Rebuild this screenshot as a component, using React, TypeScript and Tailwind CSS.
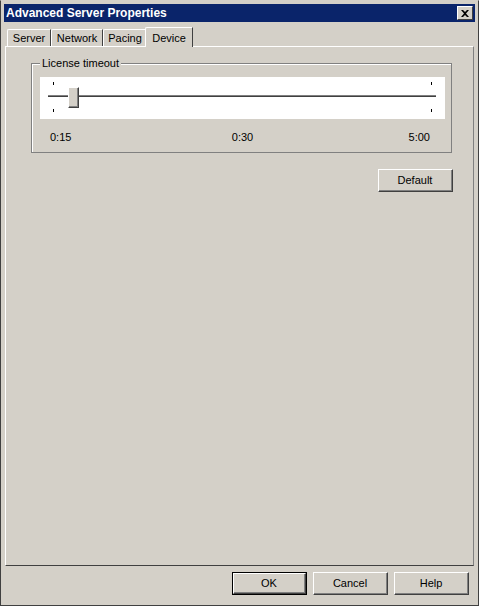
import React from "react";

const font = { fontFamily: '"Liberation Sans", Arial, sans-serif' };

function Btn({ label, isDefault = false }: { label: string; isDefault?: boolean }) {
  return (
    <div className={`w-[75px] h-[23px] ${isDefault ? "border border-black" : ""}`}>
      <div className="w-full h-full border-t border-l border-white border-r border-b border-r-[#404040] border-b-[#404040]">
        <div className="w-full h-full border-r border-b border-[#808080] flex items-center justify-center text-[11px] text-black bg-[#d4d0c8]">
          {label}
        </div>
      </div>
    </div>
  );
}

function Tab({ label, width, active = false }: { label: string; width: number; active?: boolean }) {
  if (active) {
    return (
      <div
        className="h-[20px] -mb-[1px] -ml-[2px] z-10 bg-[#d4d0c8] border-t border-l border-white border-r border-r-[#404040] rounded-tl-[2px] flex items-start justify-center pt-[2px] text-[11px] text-black"
        style={{ width }}
      >
        {label}
      </div>
    );
  }
  return (
    <div
      className="h-[17px] bg-[#d4d0c8] border-t border-l border-white border-r border-r-[#404040] rounded-tl-[2px] flex items-center justify-center text-[11px] text-black"
      style={{ width }}
    >
      {label}
    </div>
  );
}

export default function App() {
  return (
    <div style={font} className="w-[479px] h-[606px] bg-[#d4d0c8] border border-[#404040] border-t-[#d4d0c8] border-l-[#404040] p-[3px] flex flex-col select-none">
      {/* title bar */}
      <div className="h-[18px] bg-[#0a246a] flex items-center justify-between pl-[2px] pr-[2px]">
        <span className="text-white font-bold text-[12px] leading-none">Advanced Server Properties</span>
        <div className="w-[16px] h-[14px] bg-[#d4d0c8] border-t border-l border-white border-r border-b border-r-[#404040] border-b-[#404040] flex items-center justify-center">
          <svg width="8" height="7" viewBox="0 0 8 7">
            <path d="M0 0 L2 0 L4 2 L6 0 L8 0 L5 3.5 L8 7 L6 7 L4 5 L2 7 L0 7 L3 3.5 Z" fill="black" />
          </svg>
        </div>
      </div>

      {/* tabs */}
      <div className="flex items-end mt-[5px] pl-[3px] h-[19px]">
        <Tab label="Server" width={44} />
        <Tab label="Network" width={52} />
        <Tab label="Pacing" width={44} />
        <Tab label="Device" width={48} active />
      </div>

      {/* tab page */}
      <div className="mx-[1px] h-[520px] border-t border-l border-white border-r border-b border-r-[#808080] border-b-[#404040] pt-[16px] pl-[25px] pr-[21px]">
        <div className="relative border border-[#808080] h-[90px]">
          <div className="absolute inset-0 border-t border-l border-white pointer-events-none" />
          <span className="absolute -top-[8px] left-[8px] px-[2px] bg-[#d4d0c8] text-[11px] text-black leading-[14px]">
            License timeout
          </span>
          <div className="mt-[13px] ml-[8px] mr-[6px] h-[42px] bg-white relative">
            {/* ticks */}
            <div className="absolute left-[13px] top-[5px] w-[1px] h-[3px] bg-black" />
            <div className="absolute left-[13px] top-[32px] w-[1px] h-[3px] bg-black" />
            <div className="absolute left-[391px] top-[5px] w-[1px] h-[3px] bg-black" />
            <div className="absolute left-[391px] top-[32px] w-[1px] h-[3px] bg-black" />
            {/* track */}
            <div className="absolute left-[8px] right-[9px] top-[18px] h-[3px] border-t border-[#808080] border-b border-b-white bg-[#404040]" />
            {/* thumb */}
            <div className="absolute left-[28px] top-[10px] w-[11px] h-[21px] bg-[#d4d0c8] border-t border-l border-white border-r border-b border-r-[#404040] border-b-[#404040]">
              <div className="w-full h-full border-r border-b border-[#808080]" />
            </div>
          </div>
          <div className="flex justify-between ml-[18px] mr-[21px] mt-[11px] text-[11px] text-black leading-[14px]">
            <span>0:15</span>
            <span className="pl-[5px]">0:30</span>
            <span>5:00</span>
          </div>
        </div>
        <div className="flex justify-end mt-[16px] pr-[0px] -mr-[1px]">
          <Btn label="Default" />
        </div>
      </div>

      {/* bottom buttons */}
      <div className="flex justify-end gap-[6px] mt-[6px] pr-[6px]">
        <Btn label="OK" isDefault />
        <Btn label="Cancel" />
        <Btn label="Help" />
      </div>
    </div>
  );
}
